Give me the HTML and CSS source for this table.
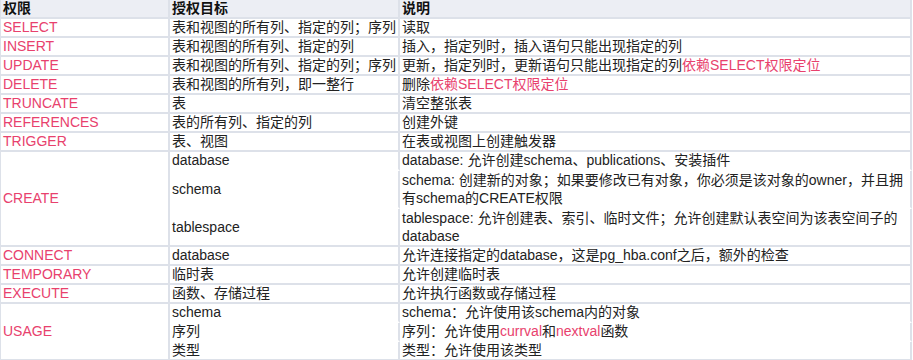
FILE: index.html
```html
<!DOCTYPE html>
<html lang="zh-CN">
<head>
<meta charset="utf-8">
<title>权限</title>
<link rel="stylesheet" href="styles.css">
</head>
<body>
<div class="grid">
  <div class="cell head">权限</div>
  <div class="cell head">授权目标</div>
  <div class="cell head last">说明</div>

  <div class="cell priv">SELECT</div>
  <div class="cell">表和视图的所有列、指定的列；序列</div>
  <div class="cell last">读取</div>

  <div class="cell priv">INSERT</div>
  <div class="cell">表和视图的所有列、指定的列</div>
  <div class="cell last">插入，指定列时，插入语句只能出现指定的列</div>

  <div class="cell priv">UPDATE</div>
  <div class="cell">表和视图的所有列、指定的列；序列</div>
  <div class="cell last">更新，指定列时，更新语句只能出现指定的列<span class="red">依赖SELECT权限定位</span></div>

  <div class="cell priv">DELETE</div>
  <div class="cell">表和视图的所有列，即一整行</div>
  <div class="cell last">删除<span class="red">依赖SELECT权限定位</span></div>

  <div class="cell priv">TRUNCATE</div>
  <div class="cell">表</div>
  <div class="cell last">清空整张表</div>

  <div class="cell priv">REFERENCES</div>
  <div class="cell">表的所有列、指定的列</div>
  <div class="cell last">创建外键</div>

  <div class="cell priv">TRIGGER</div>
  <div class="cell">表、视图</div>
  <div class="cell last">在表或视图上创建触发器</div>

  <div class="cell priv mid span3">CREATE</div>
  <div class="cell mid sub">database</div>
  <div class="cell last sub">database: 允许创建schema、publications、安装插件</div>
  <div class="cell mid sub">schema</div>
  <div class="cell last sub multi">schema: 创建新的对象；如果要修改已有对象，你必须是该对象的owner，并且拥<br>有schema的CREATE权限</div>
  <div class="cell mid">tablespace</div>
  <div class="cell last multi">tablespace: 允许创建表、索引、临时文件；允许创建默认表空间为该表空间子的<br>database</div>

  <div class="cell priv">CONNECT</div>
  <div class="cell">database</div>
  <div class="cell last">允许连接指定的database，这是pg_hba.conf之后，额外的检查</div>

  <div class="cell priv">TEMPORARY</div>
  <div class="cell">临时表</div>
  <div class="cell last">允许创建临时表</div>

  <div class="cell priv">EXECUTE</div>
  <div class="cell">函数、存储过程</div>
  <div class="cell last">允许执行函数或存储过程</div>

  <div class="cell priv mid span3">USAGE</div>
  <div class="cell sub">schema</div>
  <div class="cell last sub">schema：允许使用该schema内的对象</div>
  <div class="cell sub">序列</div>
  <div class="cell last sub">序列：允许使用<span class="red">currval</span>和<span class="red">nextval</span>函数</div>
  <div class="cell">类型</div>
  <div class="cell last">类型：允许使用该类型</div>
</div>
</body>
</html>
```

FILE: styles.css
```css
html, body {
  margin: 0;
  padding: 0;
  background: #ffffff;
}

.grid {
  display: grid;
  grid-template-columns: 169px 230px 512px;
  border-left: 1px solid #dde1e9;
  width: 912px;
  font-family: "Liberation Sans", "Noto Sans CJK SC", sans-serif;
  font-size: 14px;
  line-height: 17px;
  color: #222222;
}

.cell {
  border-right: 2px solid #dde1e9;
  border-bottom: 2px solid #dde1e9;
  padding: 0 2px;
  white-space: nowrap;
  overflow: hidden;
  background: #ffffff;
}

.head {
  background: #eceef4;
  font-weight: bold;
  color: #111111;
}

.priv {
  color: #e8416d;
}

.red {
  color: #e8416d;
}

.mid {
  display: flex;
  align-items: center;
}

.span3 {
  grid-row: span 3;
}

.sub {
  border-bottom-color: #ffffff;
}

.multi {
  line-height: 18px;
}
```
